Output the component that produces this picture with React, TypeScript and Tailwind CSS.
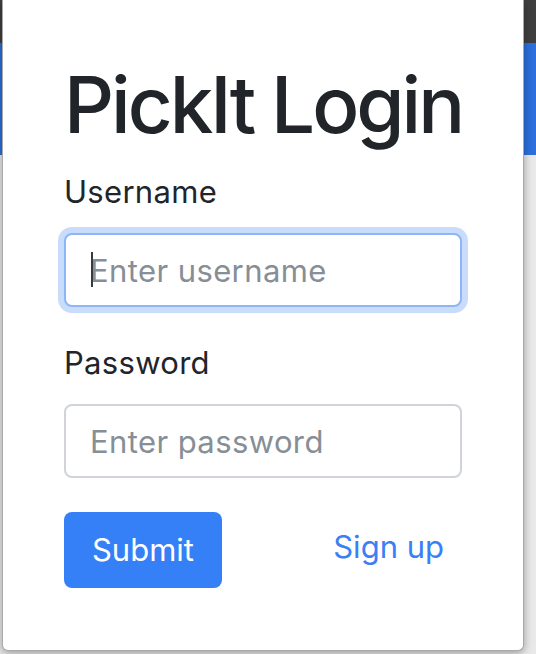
import React, { useState } from 'react';

const App = () => {
  const [username, setUsername] = useState('');
  const [password, setPassword] = useState('');

  return (
    <div className="relative w-[536px] h-[654px] overflow-hidden font-['Inter','Liberation_Sans',sans-serif]">
      {/* page behind the modal */}
      <div className="flex flex-col h-full">
        <div className="h-[43px] bg-[#3f3f3f]" />
        <div className="h-[112px] bg-[#2c6fdd]" />
        <div className="flex-1 bg-[#e9e9e9]" />
      </div>

      {/* login modal */}
      <div className="absolute left-[2px] top-0 w-[522px] bg-white border border-[#a9a9a9] border-t-0 rounded-b-[6px] shadow-[0_2px_8px_rgba(0,0,0,0.35)] pl-[61px] pr-[61px] pt-[58px] pb-[62px]">
        <h1 className="whitespace-nowrap text-[78px] leading-[94px] font-medium text-[#212529] tracking-[-3px] mb-[16px]">
          PickIt Login
        </h1>

        <label className="block text-[31px] leading-[47px] text-[#212529] tracking-[0.3px] mb-[18px]">Username</label>
        <div className="relative">
          <input
            type="text"
            value={username}
            onChange={(e) => setUsername(e.target.value)}
            placeholder="Enter username"
            className="w-full h-[74px] px-[24px] text-[31px] tracking-[0.4px] text-[#495057] bg-white border-2 border-[#8db6f7] rounded-[8px] outline-none ring-[6px] ring-[#c9dcfb] placeholder:text-[#868e96]"
          />
          {/* blinking caret */}
          <span className="absolute left-[27px] top-[19px] w-[2px] h-[35px] bg-[#3a3a3a]" />
        </div>

        <label className="block text-[31px] leading-[47px] text-[#212529] tracking-[0.3px] mt-[32px] mb-[18px]">Password</label>
        <input
          type="password"
          value={password}
          onChange={(e) => setPassword(e.target.value)}
          placeholder="Enter password"
          className="w-full h-[74px] px-[24px] text-[31px] tracking-[0.4px] text-[#495057] bg-white border-2 border-[#d0d4d9] rounded-[8px] outline-none placeholder:text-[#868e96]"
        />

        <div className="flex items-center justify-between mt-[34px]">
          <button className="w-[158px] h-[76px] bg-[#3580f6] text-white text-[31px] rounded-[8px]">
            Submit
          </button>
          <a href="#" className="text-[31px] text-[#3a80f5] mr-[18px] -mt-[6px]">
            Sign up
          </a>
        </div>
      </div>
    </div>
  );
};

export default App;
